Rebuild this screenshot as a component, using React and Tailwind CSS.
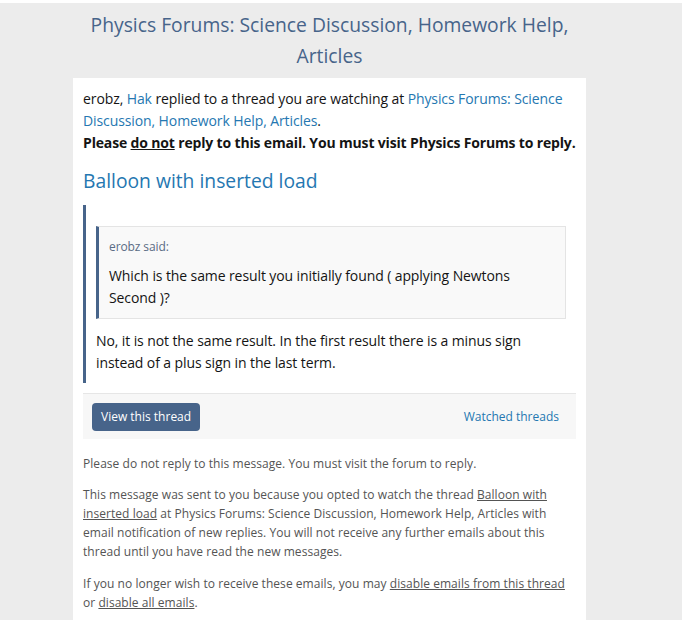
export default function App() {
  return (
    <div className="min-h-[620px] bg-white pt-[3px] pr-px font-['Open_Sans',sans-serif]">
      <div className="min-h-[617px] bg-[#ececec]">
        <div className="ml-[73px] w-[513px]">
          <h1 className="pt-[6px] pb-[7px] text-center text-[19.3px] font-normal leading-[31px] text-[#47648a]">
            Physics Forums: Science Discussion, Homework Help, Articles
          </h1>
          <div className="bg-white px-[10px] pt-[10px] pb-[12px]">
            <div className="text-[14px] leading-[22px] tracking-[-0.1px] text-[#141414]">
              <p>
                erobz, <span className="text-[#2577b1]">Hak</span> replied to a thread you are watching at{" "}
                <span className="text-[#2577b1]">Physics Forums: Science Discussion, Homework Help, Articles</span>.
              </p>
              <p className="whitespace-nowrap font-bold tracking-[-0.16px]">
                Please <span className="underline">do not</span> reply to this email. You must visit Physics Forums to reply.
              </p>
            </div>
            <h2 className="mt-[14px] text-[19.3px] font-normal leading-[26px] text-[#2577b1]">
              Balloon with inserted load
            </h2>
            <div className="mt-[11px] border-l-[3px] border-[#47648a] pt-[21px] pr-[10px] pb-[9px] pl-[10px] text-[14px] tracking-[-0.1px] text-[#141414]">
              <div className="border border-l-[3px] border-[#e4e4e4] border-l-[#47648a] bg-[#f9f9f9] pt-[10px] pr-[10px] pb-[9px] pl-[10px]">
                <div className="text-[12px] leading-[19px] text-[#5a6c84]">erobz said:</div>
                <div className="mt-[9px] leading-[22px]">
                  Which is the same result you initially found ( applying Newtons Second )?
                </div>
              </div>
              <p className="mt-[11px] leading-[22px]">
                No, it is not the same result. In the first result there is a minus sign instead of a plus sign in the last term.
              </p>
            </div>
            <div className="mt-[10px] flex h-[46px] items-center justify-between border-t border-[#e6e6e6] bg-[#f7f7f7] pr-[17px] pl-[9px]">
              <span className="flex h-[28px] items-center rounded-[4px] bg-[#47648a] px-[9px] text-[12px] text-white">
                View this thread
              </span>
              <span className="text-[12px] text-[#2577b1]">Watched threads</span>
            </div>
            <div className="mt-[15px] text-[12px] leading-[19px] tracking-[0.05px] text-[#545454]">
              <p>Please do not reply to this message. You must visit the forum to reply.</p>
              <p className="mt-[12px]">
                This message was sent to you because you opted to watch the thread{" "}
                <span className="underline">Balloon with inserted load</span> at Physics Forums: Science Discussion, Homework
                Help, Articles with email notification of new replies. You will not receive any further emails about this
                thread until you have read the new messages.
              </p>
              <p className="mt-[13px]">
                If you no longer wish to receive these emails, you may{" "}
                <span className="underline">disable emails from this thread</span> or{" "}
                <span className="underline">disable all emails</span>.
              </p>
            </div>
          </div>
        </div>
      </div>
    </div>
  );
}
